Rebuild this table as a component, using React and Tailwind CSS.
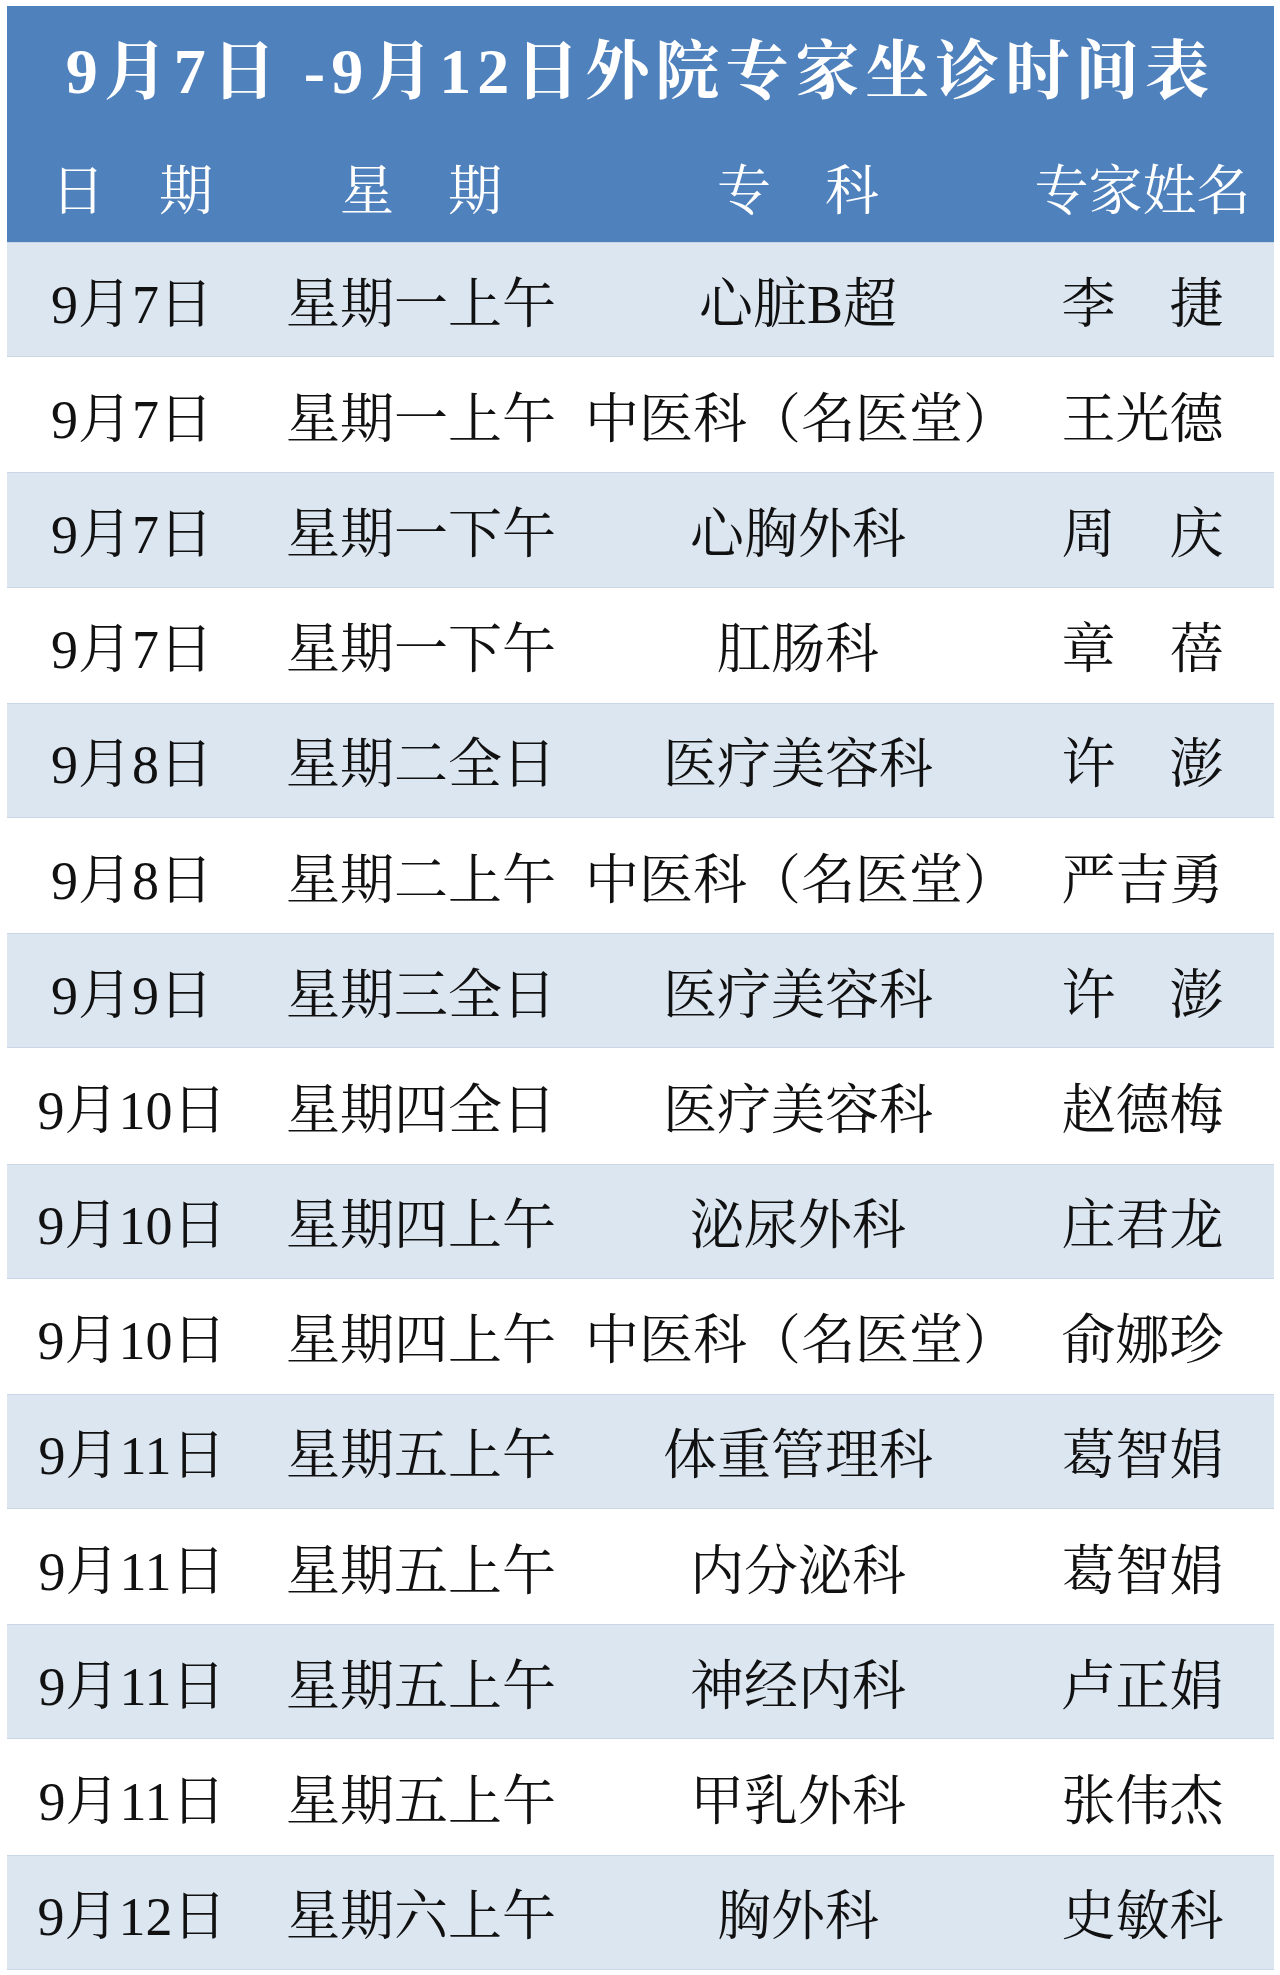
import React from "react";

const rows = [
  ["9月7日", "星期一上午", "心脏B超", "李　捷"],
  ["9月7日", "星期一上午", "中医科（名医堂）", "王光德"],
  ["9月7日", "星期一下午", "心胸外科", "周　庆"],
  ["9月7日", "星期一下午", "肛肠科", "章　蓓"],
  ["9月8日", "星期二全日", "医疗美容科", "许　澎"],
  ["9月8日", "星期二上午", "中医科（名医堂）", "严吉勇"],
  ["9月9日", "星期三全日", "医疗美容科", "许　澎"],
  ["9月10日", "星期四全日", "医疗美容科", "赵德梅"],
  ["9月10日", "星期四上午", "泌尿外科", "庄君龙"],
  ["9月10日", "星期四上午", "中医科（名医堂）", "俞娜珍"],
  ["9月11日", "星期五上午", "体重管理科", "葛智娟"],
  ["9月11日", "星期五上午", "内分泌科", "葛智娟"],
  ["9月11日", "星期五上午", "神经内科", "卢正娟"],
  ["9月11日", "星期五上午", "甲乳外科", "张伟杰"],
  ["9月12日", "星期六上午", "胸外科", "史敏科"],
];

const font = {
  fontFamily: '"Liberation Serif", "Noto Serif CJK SC", "Noto Sans CJK SC", serif',
};

export default function App() {
  return (
    <div className="w-[1280px] min-h-[1975px] bg-white pt-[6px] pl-[7px]" style={font}>
      <div className="w-[1267px]">
        <div className="bg-[#4f81bd] text-white">
          <div className="h-[122px] pt-[10px] flex items-center justify-center">
            <h1 className="text-[64px] font-bold tracking-[6px] leading-none">
              9月7日 -9月12日外院专家坐诊时间表
            </h1>
          </div>
          <div className="h-[114px] pt-[14px] grid grid-cols-[250px_328px_426px_263px] items-center text-[54px] leading-none">
            <div className="text-center">日　期</div>
            <div className="text-center">星　期</div>
            <div className="text-center">专　科</div>
            <div className="text-center">专家姓名</div>
          </div>
        </div>
        {rows.map((r, i) => (
          <div
            key={i}
            className={`h-[115.2px] pt-[10px] grid grid-cols-[250px_328px_426px_263px] items-center text-[54px] leading-none text-[#111] ${
              i % 2 === 0 ? "bg-[#dce6f1] border-y border-[#c9d6e6]" : "bg-white"
            }`}
          >
            <div className="text-center">{r[0]}</div>
            <div className="text-center">{r[1]}</div>
            <div className="text-center">{r[2]}</div>
            <div className="text-center">{r[3]}</div>
          </div>
        ))}
      </div>
    </div>
  );
}
